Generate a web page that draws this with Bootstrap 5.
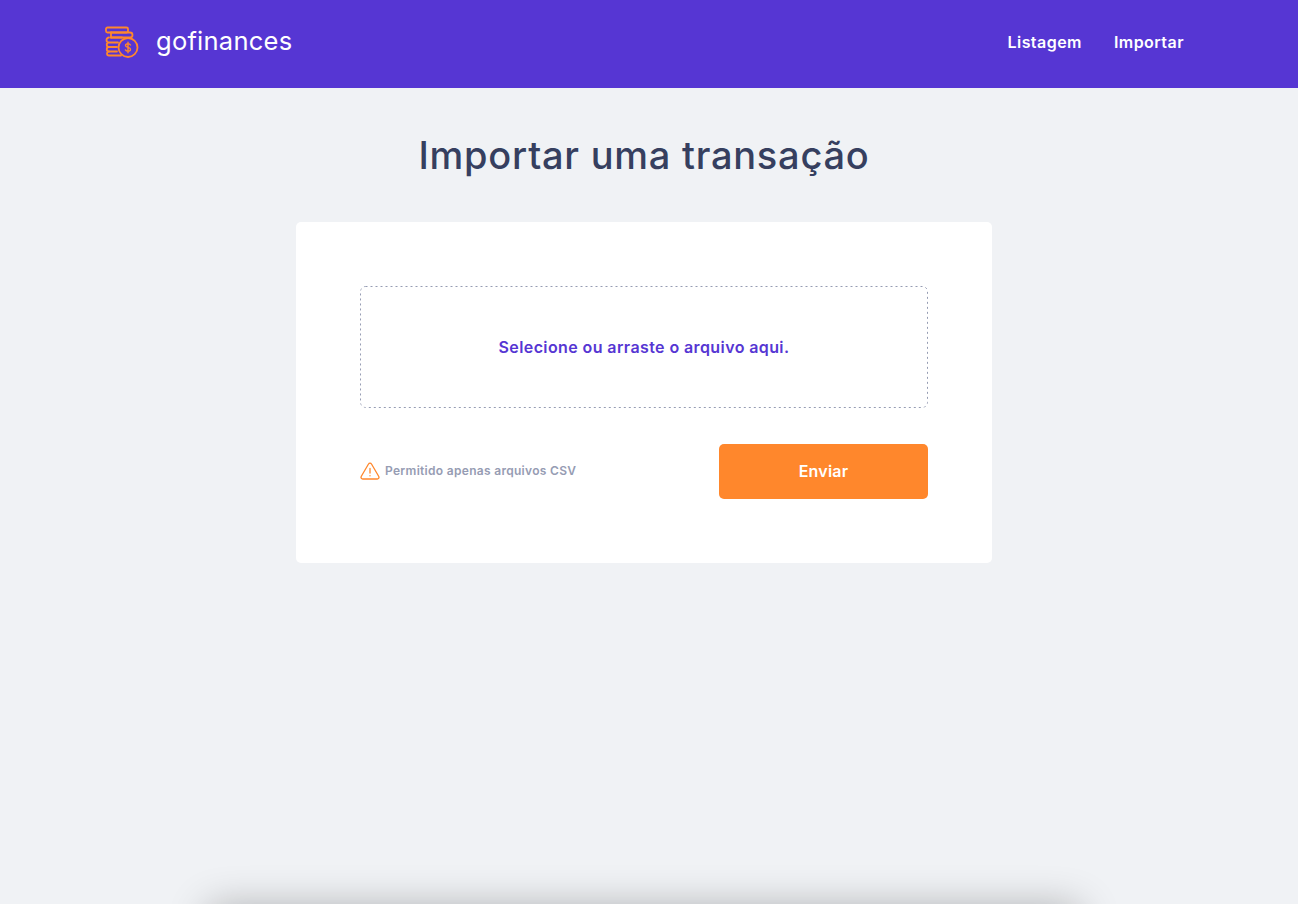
<!DOCTYPE html>
<html lang="pt-BR">
<head>
    <meta charset="UTF-8">
    <meta name="viewport" content="width=device-width, initial-scale=1.0">
    <title>GoFinances</title>
    <link href="https://cdn.jsdelivr.net/npm/bootstrap@5.3.0/dist/css/bootstrap.min.css" rel="stylesheet">
    <style>
        html, body { height: 904px; overflow: hidden; }
        body { background-color: #f0f2f5; font-family: "Inter", "Liberation Sans", sans-serif; }
        .top-bar { background-color: #5636d3; height: 88px; padding: 0 114px 0 104px; }
        .logo-mark { margin-top: -3px; }
        .brand-name { font-size: 25.5px; line-height: 1; color: #fff; letter-spacing: .25px; margin-left: 16px; margin-bottom: 7px; }
        .top-link { font-size: 16px; font-weight: 600; color: #fff; text-decoration: none; margin-left: 32px; margin-bottom: 4px; letter-spacing: .45px; }
        .app-main { width: 1288px; }
        .page-title { font-size: 38px; font-weight: 500; line-height: 54px; color: #363f5f; margin: 40px 0; letter-spacing: .75px; }
        .import-box { width: 696px; height: 341px; padding: 64px; border-radius: 5px; background: #fff; }
        .drop-area { height: 122px; border-radius: 5px; color: #5636d3; font-size: 16px; font-weight: 600; letter-spacing: .4px; padding-bottom: 1px;
            background: url("data:image/svg+xml,%3Csvg xmlns='http://www.w3.org/2000/svg' width='568' height='122'%3E%3Crect x='.5' y='.5' width='567' height='121' rx='5' fill='none' stroke='%23969cb3' stroke-dasharray='2 3'/%3E%3C/svg%3E"); }
        .form-foot { margin-top: 36px; }
        .hint-icon { margin-bottom: 2px; }
        .hint-text { color: #969cb3; font-size: 12px; font-weight: 600; margin-left: 5px; margin-bottom: 2px; letter-spacing: .3px; }
        .send-btn { width: 209px; height: 55px; border: 0; border-radius: 5px; padding: 0 0 2px; background: #ff872c; color: #fff; font-size: 16px; font-weight: 600; letter-spacing: .2px; }
        .below-fold { width: 870px; height: 40px; margin: 345px auto 0; background: #f0f2f5; box-shadow: 0 0 40px rgba(0,0,0,.3); }
    </style>
</head>
<body>
    <header class="top-bar d-flex align-items-center justify-content-between">
        <div class="d-flex align-items-center">
            <svg class="logo-mark" width="36" height="34" viewBox="0 0 36 34" fill="none" stroke="#ff872c" stroke-width="1.800" stroke-linecap="round" stroke-linejoin="round">
                <rect x="2" y="1.500" width="22" height="5" rx="1.500"/>
                <path d="M7 6.500h19a1.500 1.500 0 0 1 0 5H7"/>
                <path d="M7 6.500v5"/>
                <path d="M7 11.500h11M5 11.500a2 2 0 0 0 0 5M5 16.500h9M5 16.500a2 2 0 0 0 0 4.500h8M5 21a2 2 0 0 0 0 4.500h8"/>
                <path d="M5 25.500a2 2 0 0 0 0 4h12"/>
                <circle cx="24" cy="21.500" r="9.500"/>
                <path d="M26.500 19c-.5-.9-1.300-1.300-2.500-1.300-1.400 0-2.500.7-2.500 1.800 0 2.500 5 1.300 5 3.800 0 1.100-1.100 1.900-2.500 1.900-1.200 0-2.100-.4-2.600-1.300M24 16.300v10.400" stroke-width="1.400"/>
            </svg>
            <span class="brand-name">gofinances</span>
        </div>
        <nav class="d-flex">
            <a class="top-link" href="#">Listagem</a>
            <a class="top-link" href="#">Importar</a>
        </nav>
    </header>

    <main class="app-main d-flex flex-column align-items-center">
        <h1 class="page-title text-center">Importar uma transação</h1>
        <div class="import-box">
            <div class="drop-area d-flex align-items-center justify-content-center">Selecione ou arraste o arquivo aqui.</div>
            <div class="form-foot d-flex align-items-center justify-content-between">
                <div class="d-flex align-items-center">
                    <svg class="hint-icon" width="20" height="18" viewBox="0 0 20 18" fill="none" stroke="#ff872c" stroke-width="1.300" stroke-linecap="round" stroke-linejoin="round">
                        <path d="M8.500 2 1.200 14.500A1.700 1.700 0 0 0 2.700 17h14.600a1.700 1.700 0 0 0 1.500-2.500L11.500 2a1.700 1.700 0 0 0-3 0Z"/>
                        <path d="M10 6.500v4.500M10 13.700v.1"/>
                    </svg>
                    <span class="hint-text">Permitido apenas arquivos CSV</span>
                </div>
                <button class="send-btn" type="button">Enviar</button>
            </div>
        </div>
        <div class="below-fold"></div>
    </main>

    <script src="https://cdn.jsdelivr.net/npm/bootstrap@5.3.0/dist/js/bootstrap.bundle.min.js"></script>
</body>
</html>
